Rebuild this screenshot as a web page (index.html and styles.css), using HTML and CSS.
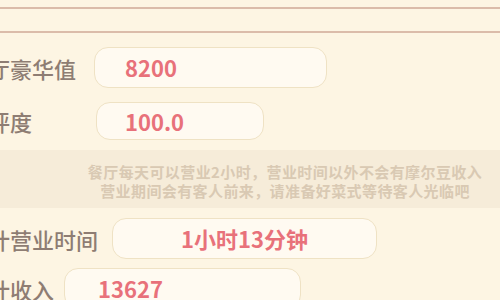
FILE: index.html
```html
<!DOCTYPE html>
<html lang="zh-CN">
<head>
    <meta charset="UTF-8">
    <meta name="viewport" content="width=device-width, initial-scale=1.0">
    <title>餐厅信息</title>
    <link rel="stylesheet" href="styles.css">
</head>
<body>

<div class="panel">
    <div class="rule rule-top"></div>
    <div class="rule rule-bottom"></div>

    <div class="row row-luxury">
        <span class="label">餐厅豪华值</span>
        <div class="value-box box-luxury">8200</div>
    </div>

    <div class="row row-rating">
        <span class="label">好评度</span>
        <div class="value-box box-rating">100.0</div>
    </div>

    <!-- 营业说明 -->
    <div class="notice">
        <p>餐厅每天可以营业2小时，营业时间以外不会有摩尔豆收入</p>
        <p>营业期间会有客人前来，请准备好菜式等待客人光临吧</p>
    </div>

    <div class="row row-time">
        <span class="label">累计营业时间</span>
        <div class="value-box box-time">1小时13分钟</div>
    </div>

    <div class="row row-income">
        <span class="label">累计收入</span>
        <div class="value-box box-income">13627</div>
    </div>
</div>

</body>
</html>
```

FILE: styles.css
```css
body {
    margin: 0;
    background-color: #fdf5e3;
    font-family: "Noto Sans CJK SC", "Noto Sans", sans-serif;
    overflow: hidden;
}
.panel {
    width: 500px;
    height: 300px;
    overflow: hidden;
}
.rule {
    height: 2px;
    background-color: #dbbcaa;
}
.rule-top {
    margin-top: 7px;
}
.rule-bottom {
    margin-top: 22px;
}
.row {
    display: flex;
    align-items: center;
    margin-left: -34px;
}
.label {
    font-size: 22px;
    font-weight: 500;
    color: #8e7d73;
    white-space: nowrap;
    line-height: 1;
}
.value-box {
    box-sizing: border-box;
    height: 41px;
    line-height: 39px;
    border: 1px solid #efe2c4;
    border-radius: 14px;
    background-color: #fffaf1;
    font-size: 22px;
    font-weight: 700;
    color: #e8717a;
    white-space: nowrap;
}
.row-luxury {
    margin-top: 14px;
}
.box-luxury {
    width: 233px;
    margin-left: 18px;
    padding-left: 30px;
}
.row-rating {
    margin-top: 14px;
}
.box-rating {
    width: 168px;
    height: 38px;
    line-height: 36px;
    margin-left: 64px;
    padding-left: 28px;
}
.notice {
    margin-top: 10px;
    height: 58px;
    box-sizing: border-box;
    padding: 12px 0 8px 70px;
    background-color: #f6ecd9;
    text-align: center;
}
.notice p {
    margin: 0;
    font-size: 15px;
    line-height: 19px;
    font-weight: 700;
    letter-spacing: 0.4px;
    color: #d9c9b3;
}
.row-time {
    margin-top: 10px;
}
.box-time {
    width: 265px;
    margin-left: 14px;
    text-align: center;
}
.row-income {
    margin-top: 9px;
}
.box-income {
    width: 237px;
    margin-left: 10px;
    padding-left: 33px;
}
```
